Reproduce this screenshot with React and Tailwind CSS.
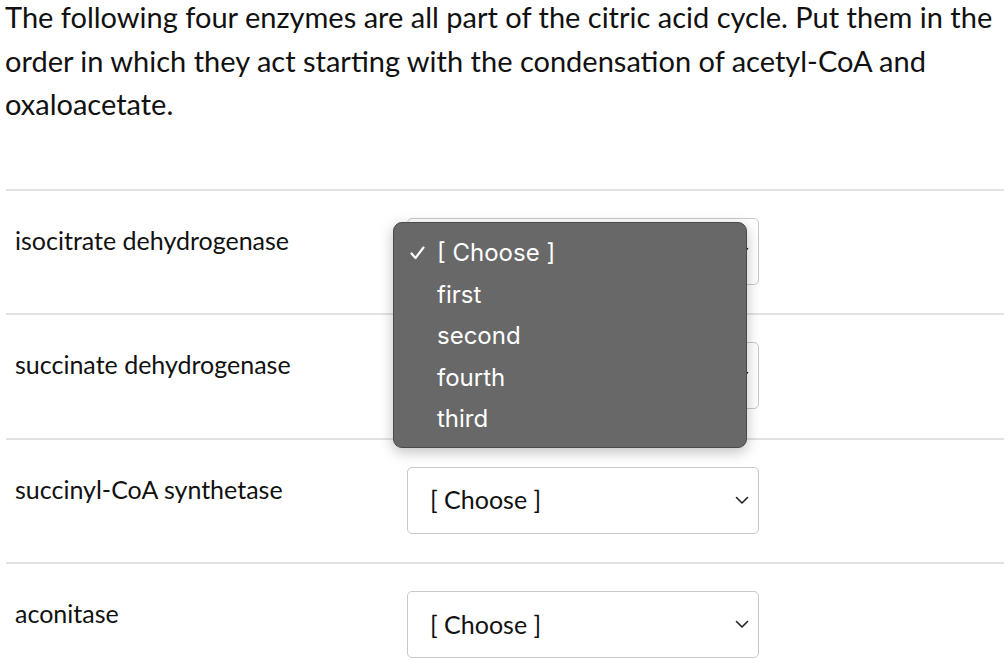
import React from 'react'

const rows = [
    { id: 1, name: "isocitrate dehydrogenase" },
    { id: 2, name: "succinate dehydrogenase" },
    { id: 3, name: "succinyl-CoA synthetase" },
    { id: 4, name: "aconitase" },
];

const options = ["[ Choose ]", "first", "second", "fourth", "third"];

function Chevron() {
    return (
        <svg width="14" height="9" viewBox="0 0 14 9" fill="none">
            <path d="M1.5 1.5 L7 7 L12.5 1.5" stroke="#222" strokeWidth="1.6" strokeLinecap="round" strokeLinejoin="round" />
        </svg>
    );
}

function Check() {
    return (
        <svg width="15" height="14" viewBox="0 0 15 14" fill="none">
            <path d="M1.5 7.5 L5.5 12 L13.5 1.5" stroke="#fff" strokeWidth="2.2" strokeLinecap="round" strokeLinejoin="round" />
        </svg>
    );
}

function Menu() {
    return (
        <div className="absolute left-[-14px] top-[4px] w-[354px] h-[226px] rounded-[9px] border border-[#4a4a4a] bg-[#686868] shadow-[0_4px_14px_rgba(0,0,0,0.25)] pt-[10px] z-10" style={{ fontFamily: 'Inter, "Noto Sans", sans-serif' }}>
            {options.map((opt, i) => (
                <div key={opt} className="flex items-center h-[41.5px] text-white text-[24px]">
                    <span className="w-[43px] pl-[16px] flex items-center">{i === 0 ? <Check /> : null}</span>
                    <span>{opt}</span>
                </div>
            ))}
        </div>
    );
}

export default function App() {
    return (
        <div className="bg-white w-[1008px] h-[663px] overflow-hidden" style={{ fontFamily: 'Lato, "Liberation Sans", sans-serif' }}>
            <p className="px-[5px] text-[29px] leading-[43.5px] text-[#111] -mt-[5px]">
                The following four enzymes are all part of the citric acid cycle. Put them in the order in which they act starting with the condensation of acetyl-CoA and oxaloacetate.
            </p>
            <div className="mt-[63px] ml-[6px] w-[998px]">
                {rows.map((row, i) => (
                    <div key={row.id} className="border-t-2 border-[#e2e2e2] h-[124.5px] flex">
                        <div className="w-[401px] pl-[9px] pt-[34px] text-[25px] text-[#111] leading-[30px]">{row.name}</div>
                        <div className="relative mt-[27px]">
                            <div className="w-[352px] h-[67px] border border-[#c8c8c8] rounded-[5px] flex items-center justify-between pl-[22px] pr-[9px] text-[25px] text-[#111]">
                                <span>[ Choose ]</span>
                                <Chevron />
                            </div>
                            {i === 0 && <Menu />}
                        </div>
                    </div>
                ))}
            </div>
        </div>
    )
}
